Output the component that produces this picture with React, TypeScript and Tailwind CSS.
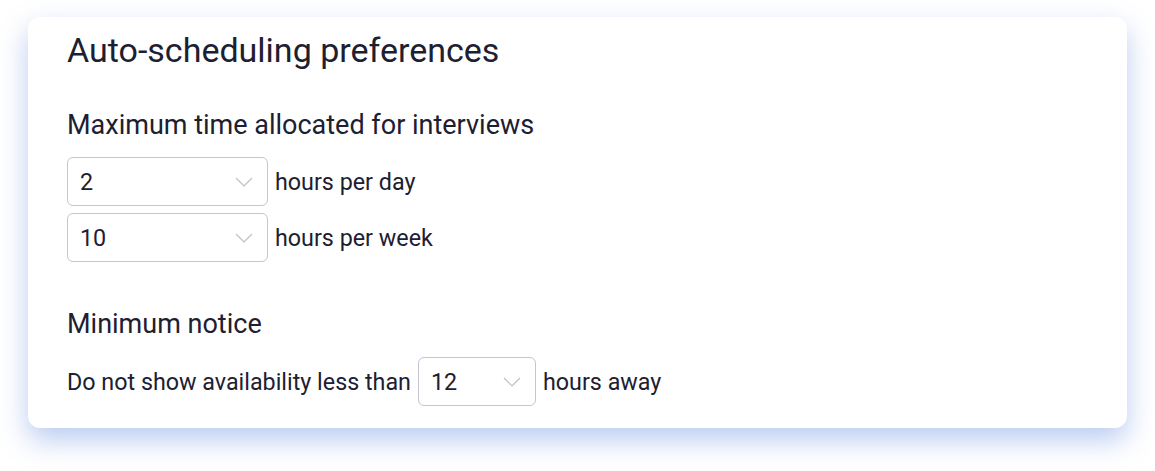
import React from 'react';

function Chevron() {
  return (
    <svg width="18" height="10" viewBox="0 0 18 10" fill="none" className="shrink-0">
      <path d="M1 1l8 8 8-8" stroke="#bdbfc8" strokeWidth="1.2" />
    </svg>
  );
}

function Select({ value, className }: { value: string; className: string }) {
  return (
    <div className={`flex h-[49px] items-center justify-between rounded-[6px] border border-[#c3c6d4] bg-white pl-[12px] pr-[14px] ${className}`}>
      <span className="text-[23.3px] leading-[28px] text-[#1d2030]">{value}</span>
      <Chevron />
    </div>
  );
}

export default function App() {
  return (
    <div className="min-h-[471px] bg-white px-[28px] pt-[17px] font-['Roboto',sans-serif] text-[#1d2030]">
      <div className="h-[411px] w-[1099px] rounded-[12px] bg-white pl-[39px] pt-[13px] shadow-[0_12px_28px_rgba(90,130,220,0.42)]">
        <h1 className="text-[34px] leading-[40px]">Auto-scheduling preferences</h1>

        <h2 className="mt-[39px] text-[27px] leading-[32px]">Maximum time allocated for interviews</h2>
        <div className="mt-[16px] flex flex-col gap-[7px]">
          <div className="flex items-center gap-[7px]">
            <Select value="2" className="w-[201px]" />
            <span className="text-[23.3px] leading-[28px]">hours per day</span>
          </div>
          <div className="flex items-center gap-[7px]">
            <Select value="10" className="w-[201px]" />
            <span className="text-[23.3px] leading-[28px]">hours per week</span>
          </div>
        </div>

        <h2 className="mt-[46px] text-[27px] leading-[32px]">Minimum notice</h2>
        <div className="mt-[17px] flex items-center gap-[7px]">
          <span className="text-[23.3px] leading-[28px]">Do not show availability less than</span>
          <Select value="12" className="w-[118px]" />
          <span className="text-[23.3px] leading-[28px]">hours away</span>
        </div>
      </div>
    </div>
  );
}
